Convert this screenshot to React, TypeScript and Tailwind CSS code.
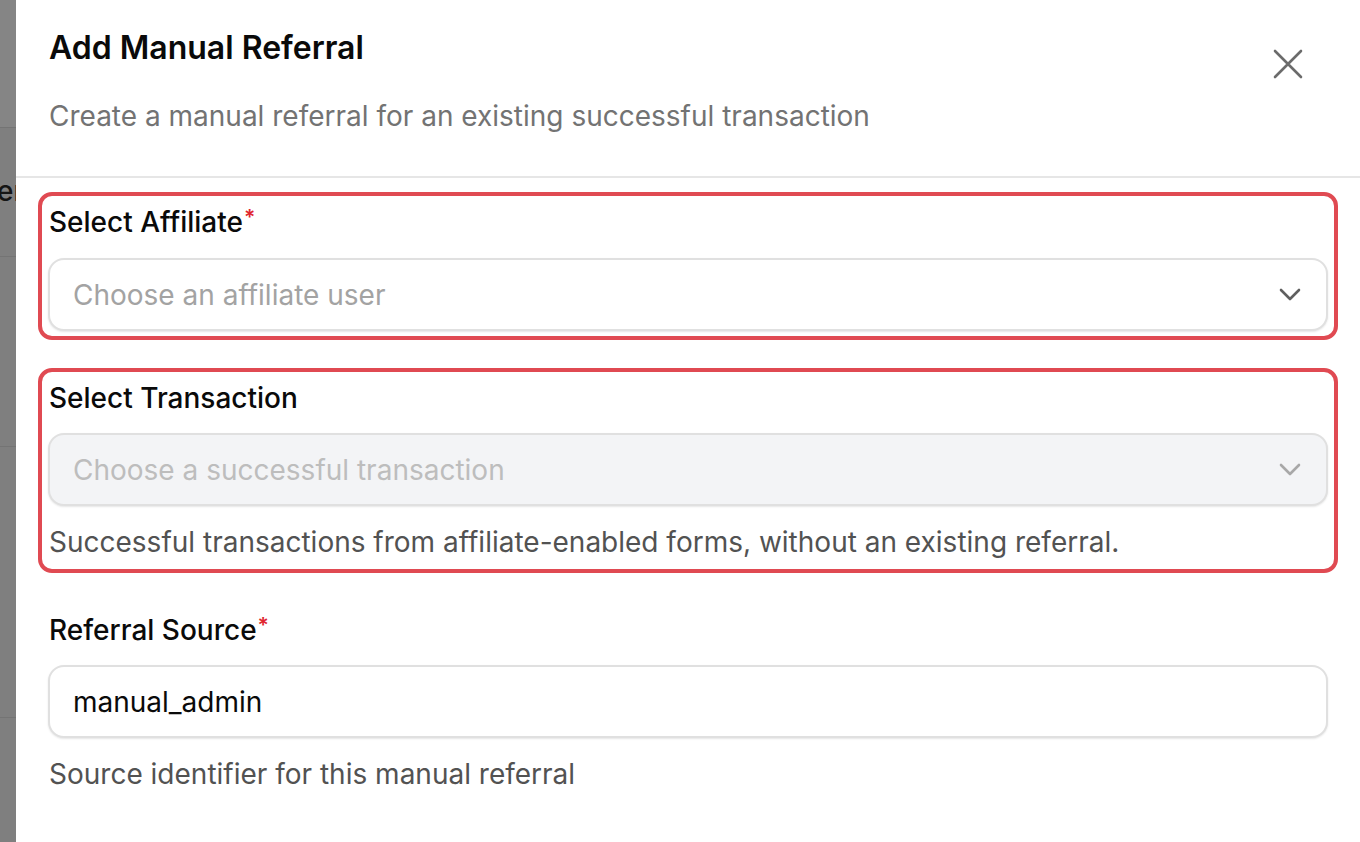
import React from "react";

const font = { fontFamily: "Inter, 'Noto Sans', sans-serif" };

function Chevron({ color }: { color: string }) {
  return (
    <svg width="22" height="13" viewBox="0 0 22 13" fill="none">
      <polyline points="2,2 11,11 20,2" stroke={color} strokeWidth="2.6" strokeLinecap="round" strokeLinejoin="round" />
    </svg>
  );
}

function Star() {
  return <sup className="text-[#e0262f] text-[21px] font-semibold relative -top-[7px] ml-[1px]">*</sup>;
}

export default function App() {
  return (
    <div className="w-[1360px] h-[842px] flex overflow-hidden bg-white" style={font}>
      {/* left backdrop strip */}
      <div className="w-[16px] h-full bg-[#7f7f7f] flex flex-col shrink-0 overflow-hidden">
        <div className="h-[128px] bg-[#858585] border-b border-[#747474]" />
        <div className="h-[129px] border-b border-[#747474] flex items-center">
          <span className="text-[28px] leading-none text-[#151515] -ml-[3px] -mt-[2px] font-medium">er</span>
        </div>
        <div className="h-[190px] border-b border-[#747474]" />
        <div className="h-[271px] border-b border-[#747474]" />
        <div className="flex-1" />
      </div>

      {/* dialog */}
      <div className="flex-1 h-full bg-white flex flex-col">
        <div className="relative pl-[33px] pt-[28px] pb-[40px] border-b-2 border-[#e6e6e6]">
          <h2 className="text-[32px] leading-[40px] font-semibold text-[#0a0a0a]">Add Manual Referral</h2>
          <p className="mt-[28px] text-[28px] leading-[40px] text-[#737373]">
            Create a manual referral for an existing successful transaction
          </p>
          <button className="absolute left-[1256px] top-[48px] w-[32px] h-[32px] flex items-center justify-center">
            <svg width="30" height="30" viewBox="0 0 30 30" fill="none">
              <path d="M2 2 L28 28 M28 2 L2 28" stroke="#6b6b6b" strokeWidth="2.6" strokeLinecap="round" />
            </svg>
          </button>
        </div>

        <div className="pl-[22px] pr-[22px] pt-[14px] flex flex-col">
          {/* Box 1 */}
          <div className="border-4 border-[#e04a52] rounded-[14px] px-[6px] pt-[6px] pb-[5px]">
            <label className="block pl-[1px] text-[28px] leading-[40px] font-medium text-[#0a0a0a]">
              Select Affiliate<Star />
            </label>
            <div className="mt-[16px] h-[73px] rounded-[16px] border-2 border-[#e0e0e0] bg-white shadow-[0_1px_2px_rgba(0,0,0,0.10)] flex items-center justify-between pl-[23px] pr-[25px]">
              <span className="text-[28px] text-[#a3a3a3]">Choose an affiliate user</span>
              <Chevron color="#5f5f5f" />
            </div>
          </div>

          {/* Box 2 */}
          <div className="mt-[28px] border-4 border-[#e04a52] rounded-[14px] px-[6px] pt-[6px] pb-[7px]">
            <label className="block pl-[1px] text-[28px] leading-[40px] font-medium text-[#0a0a0a]">Select Transaction</label>
            <div className="mt-[15px] h-[73px] rounded-[16px] border-2 border-[#e0e0e0] bg-[#f3f4f6] shadow-[0_1px_2px_rgba(0,0,0,0.10)] flex items-center justify-between pl-[23px] pr-[25px]">
              <span className="text-[28px] text-[#bdbdbd]">Choose a successful transaction</span>
              <Chevron color="#a8a8a8" />
            </div>
            <p className="mt-[16px] pl-[1px] text-[28px] leading-[40px] text-[#525252]">
              Successful transactions from affiliate-enabled forms, without an existing referral.
            </p>
          </div>

          {/* Referral Source */}
          <div className="px-[10px] mt-[37px]">
            <label className="block pl-[1px] text-[28px] leading-[40px] font-medium text-[#0a0a0a]">
              Referral Source<Star />
            </label>
            <div className="mt-[15px] h-[73px] rounded-[16px] border-2 border-[#e0e0e0] bg-white shadow-[0_1px_2px_rgba(0,0,0,0.10)] flex items-center pl-[23px]">
              <span className="text-[28px] text-[#0a0a0a]">manual_admin</span>
            </div>
            <p className="mt-[16px] pl-[1px] text-[28px] leading-[40px] text-[#525252]">
              Source identifier for this manual referral
            </p>
          </div>
        </div>
      </div>
    </div>
  );
}
